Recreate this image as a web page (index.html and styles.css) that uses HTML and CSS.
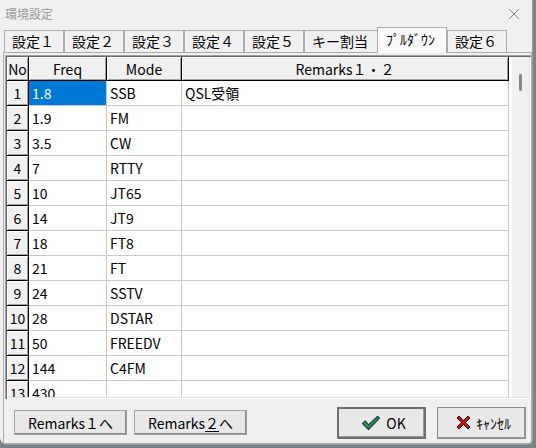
FILE: index.html
```html
<!DOCTYPE html>
<html>
<head>
    <title>環境設定</title>
    <link rel="stylesheet" href="styles.css">
</head>
<body>
    <div class="window">
        <div class="titlebar">
            <span class="title">環境設定</span>
            <svg class="close" width="12" height="12" viewBox="0 0 12 12">
                <path d="M1 1 L11 11 M11 1 L1 11" stroke="#8c8c8c" stroke-width="1" fill="none"/>
            </svg>
        </div>
        <div class="tabs">
            <div class="tab">設定１</div>
            <div class="tab">設定２</div>
            <div class="tab">設定３</div>
            <div class="tab">設定４</div>
            <div class="tab">設定５</div>
            <div class="tab">キー割当</div>
            <div class="tab active">ﾌﾟﾙﾀﾞｳﾝ</div>
            <div class="tab">設定６</div>
        </div>
        <div class="page">
            <div class="grid-box">
                <div class="cells">
                    <table class="grid">
                        <thead>
                            <tr>
                                <th class="c-no">No</th>
                                <th class="c-freq">Freq</th>
                                <th class="c-mode">Mode</th>
                                <th class="c-rem">Remarks１・２</th>
                            </tr>
                        </thead>
                        <tbody>
                            <tr><th>1</th><td class="sel">1.8</td><td>SSB</td><td>QSL受領</td></tr>
                            <tr><th>2</th><td>1.9</td><td>FM</td><td></td></tr>
                            <tr><th>3</th><td>3.5</td><td>CW</td><td></td></tr>
                            <tr><th>4</th><td>7</td><td>RTTY</td><td></td></tr>
                            <tr><th>5</th><td>10</td><td>JT65</td><td></td></tr>
                            <tr><th>6</th><td>14</td><td>JT9</td><td></td></tr>
                            <tr><th>7</th><td>18</td><td>FT8</td><td></td></tr>
                            <tr><th>8</th><td>21</td><td>FT</td><td></td></tr>
                            <tr><th>9</th><td>24</td><td>SSTV</td><td></td></tr>
                            <tr><th>10</th><td>28</td><td>DSTAR</td><td></td></tr>
                            <tr><th>11</th><td>50</td><td>FREEDV</td><td></td></tr>
                            <tr><th>12</th><td>144</td><td>C4FM</td><td></td></tr>
                            <tr><th>13</th><td>430</td><td></td><td></td></tr>
                        </tbody>
                    </table>
                </div>
                <div class="vscroll"><div class="thumb"></div></div>
            </div>
            <div class="buttons">
                <button class="btn remarks">Remarks１へ</button>
                <button class="btn remarks">Remarks<u>２</u>へ</button>
                <span class="spacer"></span>
                <button class="btn big ok">
                    <svg width="20" height="16" viewBox="0 0 20 16">
                        <path d="M1.5 8.5 L4.5 6 L7.5 10 L16.5 1.5 L18.5 3 L7.5 14.5 Z" fill="#2ea32e" stroke="#1d3b5c" stroke-width="1.2" stroke-linejoin="round"/>
                    </svg>
                    <span>OK</span>
                </button>
                <button class="btn big cancel">
                    <svg width="15" height="15" viewBox="0 0 15 15">
                        <path d="M1 3 L3 1 L7.5 5.5 L12 1 L14 3 L9.5 7.5 L14 12 L12 14 L7.5 9.5 L3 14 L1 12 L5.5 7.5 Z" fill="#c4141a" stroke="#3a0a0a" stroke-width="1" stroke-linejoin="round"/>
                    </svg>
                    <span>ｷｬﾝｾﾙ</span>
                </button>
            </div>
        </div>
    </div>
</body>
</html>
```

FILE: styles.css
```css
html, body {
    margin: 0;
    padding: 0;
    overflow: hidden;
}

body {
    width: 536px;
    height: 448px;
    background-color: #7b8389;
    font-family: "Noto Sans CJK JP", sans-serif;
    font-size: 14px;
    color: #000;
}

.window {
    width: 533px;
    height: 445px;
    box-sizing: border-box;
    background-color: #f0f0f0;
    border-right: 1px solid #9a9a9a;
    border-bottom: 1px solid #9a9a9a;
    border-radius: 0 0 7px 7px;
    display: flex;
    flex-direction: column;
}

/* title bar */

.titlebar {
    height: 27px;
    display: flex;
    align-items: center;
    padding: 0 8px 0 5px;
}

    .titlebar .title {
        flex: 1;
        font-size: 12px;
        color: #9a9a9a;
        margin-top: -1px;
    }

    .titlebar .close {
        margin-right: 4px;
    }

/* tabs */

.tabs {
    height: 25px;
    display: flex;
    align-items: flex-end;
    padding-left: 4px;
}

.tab {
    height: 22px;
    box-sizing: border-box;
    padding: 0 9px 0 7px;
    line-height: 20px;
    border: 1px solid #acacac;
    border-bottom: none;
    background-color: #f0f0f0;
    white-space: nowrap;
}

    .tab.active {
        height: 26px;
        margin: 0 0 -1px -1px;
        padding: 0 11px 0 8px;
        line-height: 22px;
        background-color: #f9f9f9;
        position: relative;
        z-index: 1;
    }

/* tab page */

.page {
    flex: 1;
    margin-left: 3px;
    border: 1px solid #acacac;
    border-bottom-left-radius: 2px;
    padding: 2px 0 0 1px;
    display: flex;
    flex-direction: column;
}

.grid-box {
    height: 344px;
    box-sizing: border-box;
    display: flex;
    padding: 2px;
    box-shadow: inset 1px 1px #a0a0a0, inset 2px 2px #696969, inset -1px -1px #ffffff, inset -2px -2px #e3e3e3;
}

.cells {
    flex: 1;
    overflow: hidden;
    background-color: #fff;
}

.grid {
    border-collapse: separate;
    border-spacing: 0;
    table-layout: fixed;
    width: 502px;
}

    .grid th, .grid td {
        box-sizing: border-box;
        padding: 0 0 0 3px;
        font-weight: normal;
        white-space: nowrap;
        overflow: hidden;
        text-align: left;
    }

    .grid th {
        background-color: #f0f0f0;
        border-right: 1px solid #000;
        border-bottom: 1px solid #000;
        box-shadow: inset 1px 1px #fff, inset -1px -1px #a0a0a0;
        text-align: center;
        padding: 0;
    }

    .grid thead th {
        height: 24px;
    }

    .grid td {
        height: 25px;
        border-right: 1px solid #c8c8c8;
        border-bottom: 1px solid #c8c8c8;
    }

    .grid tbody th {
        height: 25px;
    }

    .grid td.sel {
        background-color: #0078d7;
        color: #fff;
    }

.c-no {
    width: 22px;
}

.c-freq {
    width: 78px;
}

.c-mode {
    width: 75px;
}

.c-rem {
    width: 327px;
}

.vscroll {
    width: 17px;
    background-color: #f0f0f0;
}

    .vscroll .thumb {
        width: 3px;
        height: 17px;
        margin: 17px 0 0 7px;
        background-color: #858585;
        border-radius: 2px;
    }

/* buttons */

.buttons {
    display: flex;
    align-items: center;
    height: 33px;
    margin-top: 7px;
    padding: 0 5px 0 9px;
}

.spacer {
    flex: 1;
}

.btn {
    font-family: "Noto Sans CJK JP", sans-serif;
    font-size: 14px;
    color: #000;
    background-color: #e8e8e8;
    border: 1px solid #adadad;
    box-sizing: border-box;
    padding: 0;
    display: flex;
    align-items: center;
    justify-content: center;
}

    .btn.remarks {
        width: 113px;
        height: 25px;
        margin-right: 7px;
        border-color: #a0a0a0;
        box-shadow: inset -1px -1px #8a8a8a;
    }

    .btn.remarks u {
        text-underline-offset: 2px;
    }

    .btn.big {
        width: 89px;
        height: 32px;
        gap: 5px;
        border: 1px solid #707070;
        box-shadow: inset -1px -1px #9a9a9a;
    }

    .btn.ok {
        margin-right: 11px;
        border: 2px solid #6e6e6e;
        padding-left: 4px;
    }

    .btn.cancel {
        border-color: #8c8c8c;
        padding-left: 4px;
    }
```
